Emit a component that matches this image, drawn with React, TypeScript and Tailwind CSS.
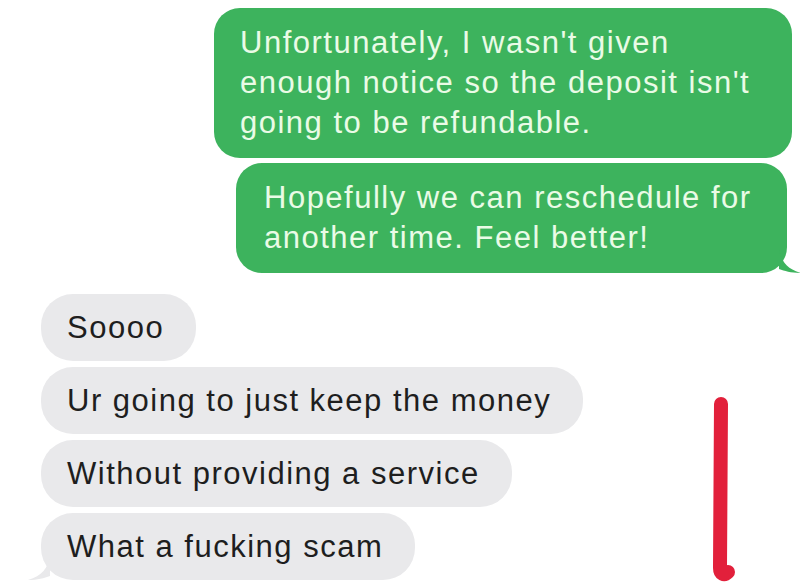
/* Text thread screenshot */

const sans = "font-['Liberation_Sans',Arial,sans-serif]";

function Sent({ children, className = "", tail = false }: { children: React.ReactNode; className?: string; tail?: boolean }) {
  return (
    <div className={`relative rounded-[26px] bg-[#3db35d] text-[#eafbe6] ${className}`}>
      <p className={`${sans} text-[31px] leading-[40px] tracking-[1.5px]`}>{children}</p>
      {tail && (
        <svg className="absolute -right-[14px] bottom-0" width="22" height="24" viewBox="0 0 22 24">
          <path d="M0 0 C2 12 8 20 22 24 C12 24 6 22 0 20 Z" fill="#3db35d" />
        </svg>
      )}
    </div>
  );
}

function Received({ text, tail = false }: { text: string; tail?: boolean }) {
  return (
    <div className="relative self-start rounded-[32px] bg-[#e9e9eb] pl-[26px] pr-[32px] py-[13px] text-[#1e1e1e]">
      <p className={`${sans} text-[31px] leading-[41px] tracking-[1.5px] whitespace-nowrap`}>{text}</p>
      {tail && (
        <svg className="absolute -left-[13px] bottom-0" width="22" height="24" viewBox="0 0 22 24">
          <path d="M22 0 C20 12 14 20 0 24 C10 24 16 22 22 20 Z" fill="#e9e9eb" />
        </svg>
      )}
    </div>
  );
}

export default function App() {
  return (
    <div className="relative w-[800px] h-[586px] overflow-hidden bg-white">
      <div className="flex flex-col items-end pt-[8px]">
        <Sent className="mr-[8px] w-[578px] pl-[26px] pr-[14px] py-[15px]">
          Unfortunately, I wasn't given
          <br />
          enough notice so the deposit isn't
          <br />
          going to be refundable.
        </Sent>
        <Sent tail className="mt-[5px] mr-[13px] w-[551px] pl-[28px] pr-[10px] py-[15px]">
          Hopefully we can reschedule for
          <br />
          another time. Feel better!
        </Sent>
      </div>

      <div className="flex flex-col gap-[6px] pl-[41px] pt-[21px]">
        <Received text="Soooo" />
        <Received text="Ur going to just keep the money" />
        <Received text="Without providing a service" />
        <Received tail text="What a fucking scam" />
      </div>

      {/* red marker annotation */}
      <svg className="absolute left-[708px] top-[392px]" width="32" height="194" viewBox="0 0 32 194">
        <path
          d="M13 12 L12 176 C12 182 16 184 20 180"
          stroke="#e2203b"
          strokeWidth="14"
          strokeLinecap="round"
          fill="none"
        />
      </svg>
    </div>
  );
}
